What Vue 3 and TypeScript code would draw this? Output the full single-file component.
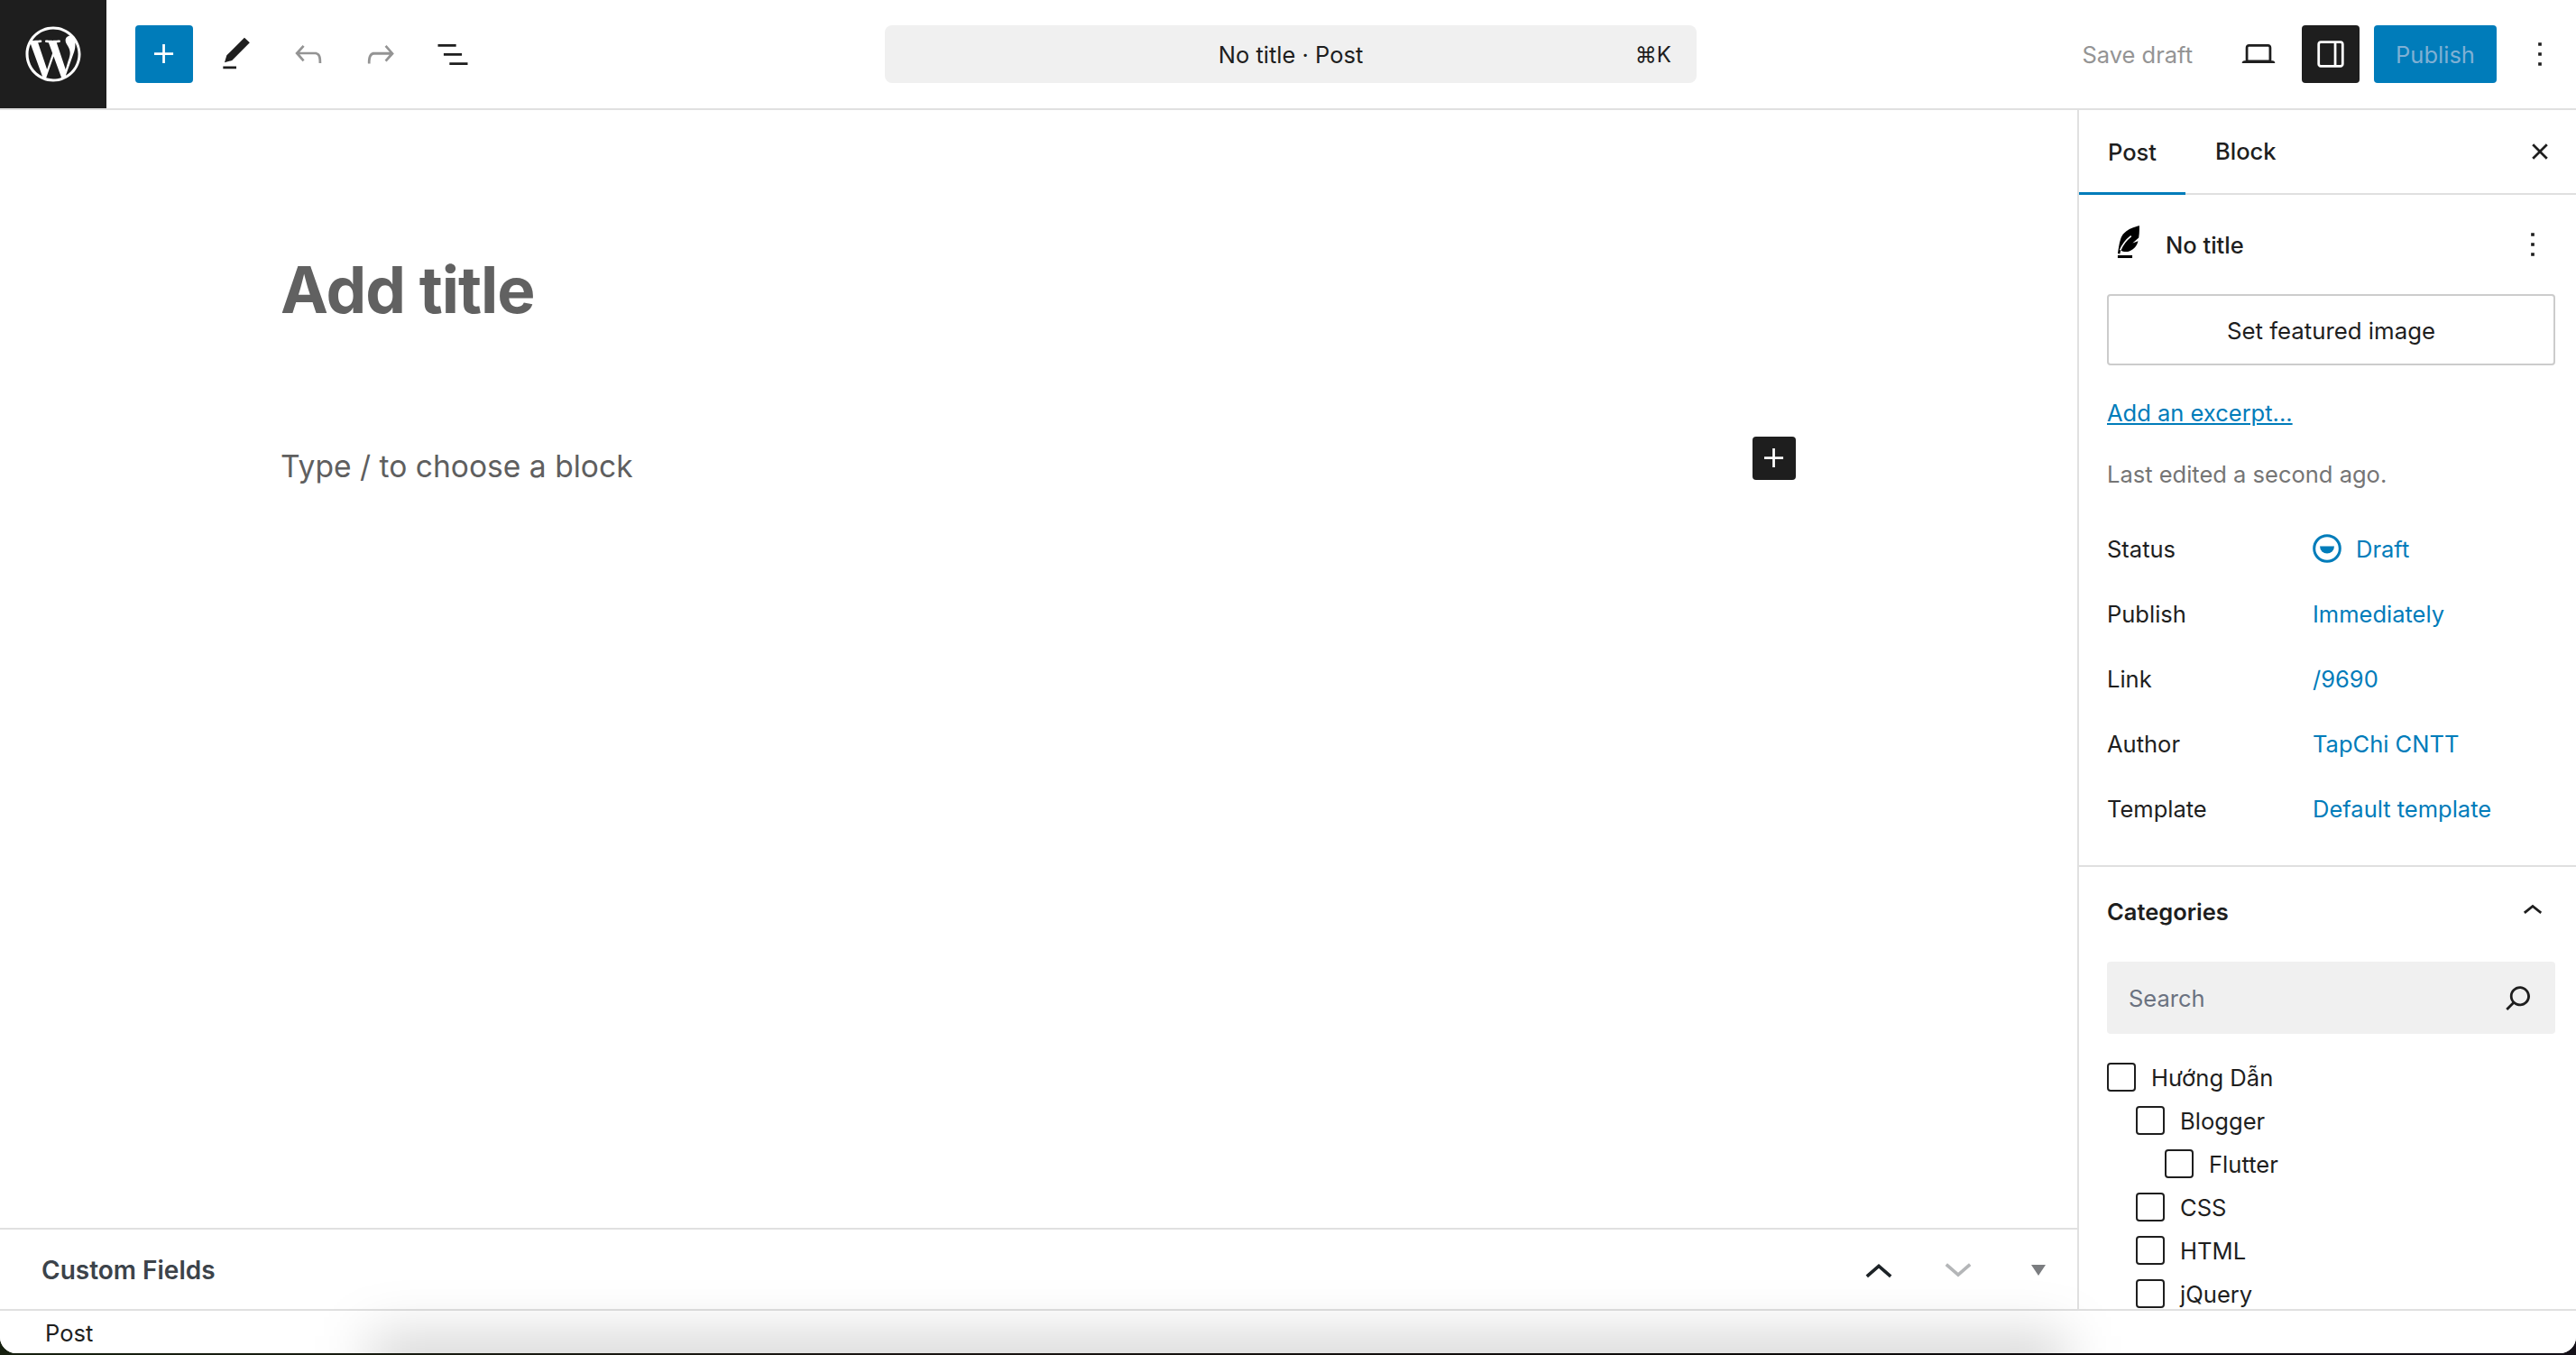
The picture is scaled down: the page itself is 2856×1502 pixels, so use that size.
<script setup lang="ts">
const rows = [
  { label: 'Publish', value: 'Immediately' },
  { label: 'Link', value: '/9690' },
  { label: 'Author', value: 'TapChi CNTT' },
  { label: 'Template', value: 'Default template' },
]
const cats = [
  { name: 'Hướng Dẫn', level: 0 },
  { name: 'Blogger', level: 1 },
  { name: 'Flutter', level: 2 },
  { name: 'CSS', level: 1 },
  { name: 'HTML', level: 1 },
  { name: 'jQuery', level: 1 },
]
</script>

<template>
  <div class="screen">
    <div class="window">
      <header class="topbar">
        <div class="logo">
          <svg viewBox="0 0 80 80" width="66" height="66" fill="#fff">
            <path d="M40 3C19.6 3 3 19.6 3 40s16.6 37 37 37 37-16.6 37-37S60.4 3 40 3zM6.7 40c0-4.8 1-9.4 2.9-13.6l15.9 43.5C14.400 64.500 6.700 53.200 6.700 40zm33.300 33.300c-3.300 0-6.400-.5-9.400-1.400l10-29 10.200 28c.1.200.2.300.2.500-3.400 1.200-7.100 1.900-11 1.900zm4.600-48.900c2-.1 3.800-.3 3.800-.3 1.800-.2 1.600-2.900-.2-2.800 0 0-5.400.4-8.900.4-3.300 0-8.800-.4-8.800-.4-1.800-.1-2 2.700-.2 2.800 0 0 1.700.2 3.500.3l5.200 14.300-7.300 22L19.600 24.400c2-.1 3.800-.3 3.800-.3 1.800-.2 1.600-2.900-.2-2.800 0 0-5.400.4-8.900.4-.6 0-1.400 0-2.200 0C18 12.600 28.400 6.700 40 6.700c8.700 0 16.600 3.300 22.500 8.800-.1 0-.3 0-.4 0-3.300 0-5.600 2.900-5.600 5.900 0 2.800 1.600 5.100 3.300 7.900 1.300 2.200 2.800 5.100 2.800 9.200 0 2.900-.8 6.500-2.600 10.900l-3.300 11.100-12.100-36.100zm12.200 44.500L67 40.100c1.900-4.800 2.600-8.700 2.600-12.100 0-1.200-.1-2.400-.2-3.400 2.600 4.700 4 10 4 15.500 0 12.300-6.700 23-16.600 28.800z"/>
          </svg>
        </div>
        <div class="tools">
          <button class="tool primary">
            <svg viewBox="0 0 24 24" class="ic" fill="#fff"><path d="M11 12.500V17.500H12.500V12.500H17.500V11H12.500V6H11V11H6V12.500H11Z"/></svg>
          </button>
          <button class="tool">
            <svg viewBox="0 0 24 24" class="ic" fill="#1e1e1e"><path d="M20.100 5.100L16.900 2 6.200 12.700l-1.300 4.400 4.500-1.300L20.100 5.100zM4 20.800h8v-1.500H4v1.500z"/></svg>
          </button>
          <button class="tool">
            <svg viewBox="0 0 24 24" class="ic" fill="#949494"><path d="M18.300 11.700c-.6-.6-1.400-.9-2.300-.9H6.700l2.900-3.300-1.100-1-4.500 5L8.500 16.500l1.100-1-2.900-3.300H16c.5 0 .9.200 1.300.500 1 1 1 3.400 1 4.500v.3h1.500v-.2c0-1.500 0-4.300-1.500-5.800z"/></svg>
          </button>
          <button class="tool">
            <svg viewBox="0 0 24 24" class="ic" fill="#949494"><path d="M15.600 6.500l-1.100 1 2.900 3.300H8c-.9 0-1.700.3-2.300.9-1.400 1.500-1.400 4.200-1.400 5.800v.2h1.500v-.3c0-1.100 0-3.500 1-4.500.3-.3.700-.5 1.300-.5h9.200L14.500 15.700l1.100 1 4.500-5-4.500-5.200z"/></svg>
          </button>
          <button class="tool">
            <svg viewBox="0 0 24 24" class="ic" fill="#1e1e1e"><path d="M3 6h11v1.500H3V6zm3.500 5.500h11V13h-11v-1.500zM21 17H10v1.500h11V17z"/></svg>
          </button>
        </div>
        <div class="center">
          <div class="command">
            <span class="command-title">No title · Post</span>
            <span class="command-key">⌘K</span>
          </div>
        </div>
        <div class="actions">
          <span class="save">Save draft</span>
          <button class="tool view">
            <svg viewBox="0 0 24 24" class="ic" fill="#1e1e1e"><path d="M20.500 16h-.7V8c0-1.100-.9-2-2-2H6.200c-1.100 0-2 .9-2 2v8h-.7c-.8 0-1.500.7-1.500 1.500h20c0-.8-.7-1.500-1.500-1.500zM5.700 8c0-.3.200-.5.500-.5h11.600c.3 0 .5.200.5.500v7.600H5.700V8z"/></svg>
          </button>
          <button class="tool dark">
            <svg viewBox="0 0 24 24" class="ic" fill="#fff"><path d="M18 4H6c-1.100 0-2 .9-2 2v12c0 1.100.9 2 2 2h12c1.100 0 2-.9 2-2V6c0-1.100-.9-2-2-2zM5.500 18V6c0-.3.200-.5.500-.5h8v13H6c-.3 0-.5-.2-.5-.5zm13 0c0 .3-.2.500-.5.500h-2.500v-13H18c.3 0 .5.200.5.500v12z"/></svg>
          </button>
          <button class="publish">Publish</button>
          <button class="tool more">
            <svg viewBox="0 0 24 24" class="ic" fill="#1e1e1e"><path d="M13 19h-2v-2h2v2zm0-6h-2v-2h2v2zm0-6h-2V5h2v2z"/></svg>
          </button>
        </div>
      </header>

      <div class="body">
        <div class="left">
          <main class="canvas">
            <div class="writing">
              <h1 class="title">Add title</h1>
              <div class="block-row">
                <p class="placeholder">Type / to choose a block</p>
                <button class="block-add">
                  <svg viewBox="0 0 24 24" width="44" height="44" fill="#fff"><path d="M11 12.500V17.500H12.500V12.500H17.500V11H12.500V6H11V11H6V12.500H11Z"/></svg>
                </button>
              </div>
            </div>
          </main>
          <section class="meta">
            <h2 class="meta-title">Custom Fields</h2>
            <div class="meta-ctrl">
              <svg viewBox="0 0 24 24" width="44" height="44" fill="none" stroke="#1d2327" stroke-width="2"><path d="M4.800 15.800L12 9.500l7.200 6.300"/></svg>
              <svg viewBox="0 0 24 24" width="44" height="44" fill="none" stroke="#b4b6b8" stroke-width="2"><path d="M4.800 8.500L12 14.800l7.200-6.300"/></svg>
              <span class="caret"></span>
            </div>
          </section>
        </div>
        <aside class="sidebar">
          <div class="tabs">
            <div class="tab active">Post</div>
            <div class="tab block-tab">Block</div>
            <svg class="close" viewBox="0 0 24 24" width="44" height="44" fill="#1e1e1e"><path d="M12 13.060l3.712 3.713 1.061-1.060L13.061 12l3.712-3.712-1.060-1.060L12 10.938 8.288 7.227l-1.061 1.060L10.939 12l-3.712 3.712 1.060 1.061L12 13.061z"/></svg>
          </div>
          <div class="summary">
            <div class="post-head">
              <svg class="feather" viewBox="0 0 24 24" width="44" height="44"><path fill="#000" d="M19.600.6C14.500 2 9.800 3.800 8.200 8.800 7.300 11.600 7 14.300 6.500 17.500l1.300.2.500-2.200c1.500 1 3.600 1.200 5.500.4 2.800-1.200 4.400-3.400 5-6l-3.300 1.300 3.700-3.300c.4-2.300.4-4.900.4-7.900z"/><path fill="none" stroke="#fff" stroke-width=".9" d="M8 15.500c1.300-3.300 3.300-6 6.600-8.600"/><path fill="#000" d="M6.500 18.500h8.800v1.700H6.500z"/></svg>
              <span class="post-name">No title</span>
              <svg class="head-more" viewBox="0 0 24 24" width="44" height="44" fill="#1e1e1e"><path d="M13 19h-2v-2h2v2zm0-6h-2v-2h2v2zm0-6h-2V5h2v2z"/></svg>
            </div>
            <button class="featured">Set featured image</button>
            <a class="excerpt">Add an excerpt...</a>
            <p class="edited">Last edited a second ago.</p>
            <div class="row">
              <span class="row-label">Status</span>
              <span class="row-value status">
                <svg viewBox="0 0 32 32" width="32" height="32"><circle cx="16" cy="16" r="14.300" fill="none" stroke="#007cba" stroke-width="3"/><path d="M8 13.500h16a8 8 0 0 1-16 0z" fill="#007cba"/></svg>
                Draft
              </span>
            </div>
            <div v-for="r in rows" :key="r.label" class="row">
              <span class="row-label">{{ r.label }}</span>
              <span class="row-value">{{ r.value }}</span>
            </div>
          </div>
          <div class="categories">
            <div class="cat-head">
              <span>Categories</span>
              <svg viewBox="0 0 24 24" width="44" height="44" fill="#1e1e1e"><path d="M6.500 12.400L12 8l5.500 4.400-.9 1.200L12 10l-4.500 3.600-1-1.200z"/></svg>
            </div>
            <div class="search">
              <span>Search</span>
              <svg viewBox="0 0 24 24" width="44" height="44" fill="#1e1e1e"><path d="M13 5c-3.300 0-6 2.700-6 6 0 1.400.5 2.700 1.300 3.700l-3.800 3.800 1.100 1.100 3.800-3.800c1 .8 2.300 1.300 3.700 1.300 3.300 0 6-2.700 6-6S16.300 5 13 5zm0 10.500c-2.500 0-4.500-2-4.500-4.500s2-4.500 4.500-4.500 4.500 2 4.500 4.500-2 4.500-4.500 4.500z"/></svg>
            </div>
            <ul class="cat-list">
              <li v-for="c in cats" :key="c.name" class="cat" :style="{ paddingLeft: c.level * 32 + 'px' }">
                <span class="box"></span>{{ c.name }}
              </li>
            </ul>
          </div>
        </aside>
      </div>

      <footer class="status-bar">Post</footer>
      <div class="dock-shadow"></div>
    </div>
  </div>
</template>

<style>
html, body { margin: 0; background: #111; overflow: hidden; }
</style>

<style scoped>
* { box-sizing: border-box; }
.screen {
  width: 2856px;
  height: 1502px;
  background: linear-gradient(90deg, #16200f 0%, #1a1512 35%, #0c0a09 70%, #141018 100%);
  font-family: Inter, "Noto Sans", sans-serif;
  color: #1e1e1e;
  overflow: hidden;
}
.window {
  position: relative;
  width: 2856px;
  height: 1500px;
  background: #fff;
  border-radius: 0 0 18px 18px;
  display: flex;
  flex-direction: column;
  overflow: hidden;
}
button { font-family: inherit; border: 0; background: none; padding: 0; margin: 0; }

.topbar {
  height: 122px;
  flex: none;
  display: flex;
  align-items: center;
  border-bottom: 2px solid #e0e0e0;
}
.logo {
  width: 118px;
  height: 120px;
  background: #1e1e1e;
  display: flex;
  align-items: center;
  justify-content: center;
  flex: none;
}
.tools { display: flex; margin-left: 32px; gap: 16px; flex: none; }
.tool {
  width: 64px;
  height: 64px;
  border-radius: 4px;
  display: flex;
  align-items: center;
  justify-content: center;
  flex: none;
}
.ic { width: 44px; height: 44px; display: block; }
.primary { background: #007cba; }
.center { flex: 1; display: flex; padding-left: 447px; }
.command {
  width: 900px;
  height: 64px;
  background: #f0f0f0;
  border-radius: 8px;
  position: relative;
  display: flex;
  align-items: center;
  justify-content: center;
  font-size: 25.500px;
}
.command-key { position: absolute; right: 28px; font-size: 24px; }
.actions { display: flex; align-items: center; flex: none; padding-right: 8px; }
.save { font-size: 25.500px; color: #949494; margin-right: 41px; }
.view { margin-right: 16px; }
.dark { background: #1e1e1e; }
.publish {
  width: 136px;
  height: 64px;
  background: #007cba;
  color: #7fb0d4;
  border-radius: 4px;
  font-size: 25.500px;
  margin-left: 16px;
}
.more { margin-left: 16px; }

.body { flex: 1; min-height: 0; display: flex; }
.left { flex: 1; min-width: 0; display: flex; flex-direction: column; }
.canvas { flex: 1; min-height: 0; }
.writing { padding: 155px 0 0 311px; box-sizing: content-box; width: 1680px; }
.title {
  margin: 0;
  font-size: 71px;
  line-height: 88px;
  font-weight: 700;
  letter-spacing: -1px;
  color: #616161;
}
.block-row { display: flex; justify-content: space-between; align-items: flex-start; margin-top: 119px; }
.placeholder { margin: 0; font-size: 33.600px; line-height: 44px; color: #5f5f5f; padding-top: 11px; }
.block-add {
  width: 48px;
  height: 48px;
  background: #1e1e1e;
  border-radius: 4px;
  display: flex;
  align-items: center;
  justify-content: center;
}
.meta {
  height: 90px;
  border-top: 2px solid #e0e0e0;
  padding: 1px 0 0 46px;
  flex: none;
  display: flex;
  align-items: center;
  justify-content: space-between;
}
.meta-title { margin: 0; font-size: 28px; font-weight: 600; color: #3c434a; }
.meta-ctrl { display: flex; align-items: center; gap: 44px; padding-right: 32px; }
.caret {
  width: 0;
  height: 0;
  border-left: 8px solid transparent;
  border-right: 8px solid transparent;
  border-top: 12px solid #7b7d80;
  margin-left: 15px;
  margin-right: 3px;
}

.sidebar {
  width: 553px;
  flex: none;
  border-left: 2px solid #e0e0e0;
  overflow: hidden;
}
.tabs {
  height: 94px;
  border-bottom: 2px solid #e0e0e0;
  display: flex;
  position: relative;
  align-items: center;
}
.tab { font-size: 25.500px; font-weight: 500; height: 94px; line-height: 93px; }
.tab.active {
  width: 118px;
  padding-left: 32px;
  box-shadow: inset 0 -3px 0 #007cba;
  margin-bottom: -2px;
}
.block-tab { margin-left: 33px; }
.close { position: absolute; right: 18px; top: 24px; }
.summary { padding: 0 23px 0 31px; height: 745px; border-bottom: 2px solid #e0e0e0; }
.post-head { height: 110px; display: flex; align-items: center; position: relative; }
.feather { margin-right: 21px; }
.post-name { font-size: 25.500px; font-weight: 500; }
.head-more { position: absolute; right: 3px; top: 33px; }
.featured {
  display: block;
  width: 497px;
  height: 79px;
  border: 2px solid #ccc;
  border-radius: 4px;
  padding-top: 2px;
  font-size: 25.800px;
  font-weight: 400;
  color: #1e1e1e;
  background: #fff;
  margin: 0;
}
.excerpt {
  display: block;
  font-size: 25.500px;
  line-height: 36px;
  margin-top: 35px;
  color: #007cba;
  text-decoration: underline;
}
.edited { margin: 32px 0 28px; font-size: 25.500px; line-height: 36px; color: #757575; }
.row { display: flex; align-items: center; height: 72px; font-size: 25.500px; }
.row-label { width: 228px; flex: none; }
.row-value { color: #007cba; }
.status { display: flex; align-items: center; gap: 16px; }
.categories { padding: 0 23px 0 31px; }
.cat-head {
  height: 98px;
  display: flex;
  align-items: center;
  justify-content: space-between;
  font-size: 25.500px;
  font-weight: 600;
  padding-right: 3px;
}
.search {
  height: 80px;
  background: #f0f0f0;
  border-radius: 4px;
  margin-top: 7px;
  display: flex;
  align-items: center;
  justify-content: space-between;
  padding: 0 19px 0 24px;
  font-size: 25.500px;
  color: #6b7280;
}
.cat-list { list-style: none; margin: 24px 0 0; padding: 0; }
.cat { height: 48px; display: flex; align-items: center; font-size: 25.600px; white-space: nowrap; }
.box {
  width: 32px;
  height: 32px;
  border: 2px solid #1e1e1e;
  border-radius: 4px;
  margin-right: 17px;
  flex: none;
}
.status-bar {
  height: 49px;
  flex: none;
  border-top: 2px solid #e0e0e0;
  background: #fff;
  font-size: 25.500px;
  padding: 2px 0 0 50px;
  display: flex;
  align-items: center;
  position: relative;
  z-index: 1;
}
.dock-shadow {
  position: absolute;
  left: 410px;
  right: 566px;
  bottom: -40px;
  height: 60px;
  background: rgba(0, 0, 0, 0.17);
  filter: blur(30px);
  pointer-events: none;
  z-index: 2;
}
</style>
